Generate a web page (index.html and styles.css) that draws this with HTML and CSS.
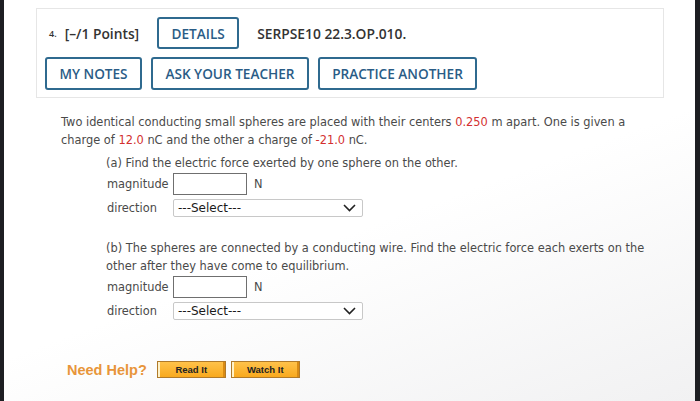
FILE: index.html
```html
<!DOCTYPE html>
<html>
<head>
<meta charset="utf-8">
<link rel="stylesheet" href="styles.css">
</head>
<body>
<div class="frame">
  <div class="page">
    <div class="card">
      <div class="row1">
        <span class="num">4.</span>
        <span class="pts">[–/1 Points]</span>
        <span class="btn details">DETAILS</span>
        <span class="code">SERPSE10 22.3.OP.010.</span>
      </div>
      <div class="row2">
        <span class="btn">MY NOTES</span>
        <span class="btn">ASK YOUR TEACHER</span>
        <span class="btn">PRACTICE ANOTHER</span>
      </div>
    </div>
    <div class="question">
      <p class="intro">Two identical conducting small spheres are placed with their centers <span class="red">0.250</span> m apart. One is given a charge of <span class="red">12.0</span> nC and the other a charge of <span class="red">-21.0</span> nC.</p>
      <div class="part">
        <p class="ptext">(a) Find the electric force exerted by one sphere on the other.</p>
        <div class="field"><span class="lbl">magnitude</span><span class="input"></span><span class="unit">N</span></div>
        <div class="field"><span class="lbl">direction</span><span class="select"><span>---Select---</span><svg width="13" height="8" viewBox="0 0 13 8"><path d="M1 1 L6.5 6.5 L12 1" fill="none" stroke="#222" stroke-width="1.6"/></svg></span></div>
      </div>
      <div class="part partb">
        <p class="ptext">(b) The spheres are connected by a conducting wire. Find the electric force each exerts on the other after they have come to equilibrium.</p>
        <div class="field"><span class="lbl">magnitude</span><span class="input"></span><span class="unit">N</span></div>
        <div class="field"><span class="lbl">direction</span><span class="select"><span>---Select---</span><svg width="13" height="8" viewBox="0 0 13 8"><path d="M1 1 L6.5 6.5 L12 1" fill="none" stroke="#222" stroke-width="1.6"/></svg></span></div>
      </div>
      <div class="help">
        <span class="need">Need Help?</span>
        <span class="hbtn">Read It</span>
        <span class="hbtn">Watch It</span>
      </div>
    </div>
  </div>
</div>
</body>
</html>
```
FILE: styles.css
```css
html, body { margin: 0; padding: 0; }
body { width: 700px; height: 401px; overflow: hidden; background: #1d1e22; }
.frame { display: flex; height: 401px; padding: 0 5px 0 4px; box-sizing: border-box; }
.page {
  flex: 1;
  background: linear-gradient(160deg, #ffffff 0%, #ffffff 55%, #f1f1f2 100%);
  padding: 8px 0 0 32px;
  box-sizing: border-box;
}
.card {
  width: 628px;
  height: 90px;
  box-sizing: border-box;
  border: 1px solid #e6e6e6;
  padding: 8px 0 0 8px;
  font-family: "Open Sans", sans-serif;
  font-weight: 600;
}
.row1 { display: flex; align-items: center; height: 32px; }
.num { font-size: 9px; color: #333; margin-left: 4px; margin-right: 8px; }
.pts { font-size: 13.8px; color: #333; margin-right: 18px; }
.code { font-size: 13.8px; color: #333; margin-left: 18px; }
.btn {
  display: inline-flex; align-items: center; justify-content: center;
  border: 2px solid #2f6a8f; border-radius: 3px;
  color: #2a5c86; font-size: 13.6px; height: 32px; box-sizing: border-box;
  padding: 0 8px;
}
.details { width: 82px; }
.row2 { display: flex; gap: 9px; margin-top: 8px; }
.row2 .btn { height: 33px; }
.row2 .btn:nth-child(1) { width: 97px; }
.row2 .btn:nth-child(2) { width: 158px; }
.row2 .btn:nth-child(3) { width: 159px; }

.question {
  font-family: "DejaVu Sans", Verdana, sans-serif;
  font-size: 11.4px;
  color: #4a4a4a;
  padding: 15px 0 0 25px;
}
.intro { margin: 0; line-height: 18px; width: 575px; }
.red { color: #d32f2f; }
.part { padding-left: 45px; margin-top: 5px; }
.partb { margin-top: 19px; }
.ptext { margin: 0; line-height: 18px; width: 550px; }
.field { display: flex; align-items: center; height: 24px; }
.lbl { width: 66px; padding-left: 1px; }
.input {
  width: 74px; height: 22px; box-sizing: border-box;
  border: 1px solid #6f6f6f; background: #fff;
}
.unit { margin-left: 7px; }
.select {
  display: flex; align-items: center; justify-content: space-between;
  width: 190px; height: 18px; box-sizing: border-box;
  border: 1px solid #c8c8c8; border-radius: 2px; background: #fff;
  padding: 0 6px 0 4px;
  font-family: "DejaVu Sans", Verdana, sans-serif; font-size: 12px; color: #1a1a1a;
}
.help { display: flex; align-items: center; margin-top: 38px; margin-left: 6px; gap: 5px; }
.need {
  font-family: "Liberation Sans", Arial, sans-serif; font-weight: bold;
  font-size: 14.5px; color: #e8953a; margin-right: 5px;
}
.hbtn {
  display: inline-flex; align-items: center; justify-content: center;
  width: 69px; height: 17px; box-sizing: border-box;
  background: linear-gradient(#ffc24a, #f8a91e);
  border: 1px solid #b07a2a;
  box-shadow: inset 2px 0 0 #fff2c8, inset -2px 0 0 #d98b14;
  font-family: "Liberation Sans", Arial, sans-serif; font-weight: bold;
  font-size: 9.5px; color: #222;
}
```
